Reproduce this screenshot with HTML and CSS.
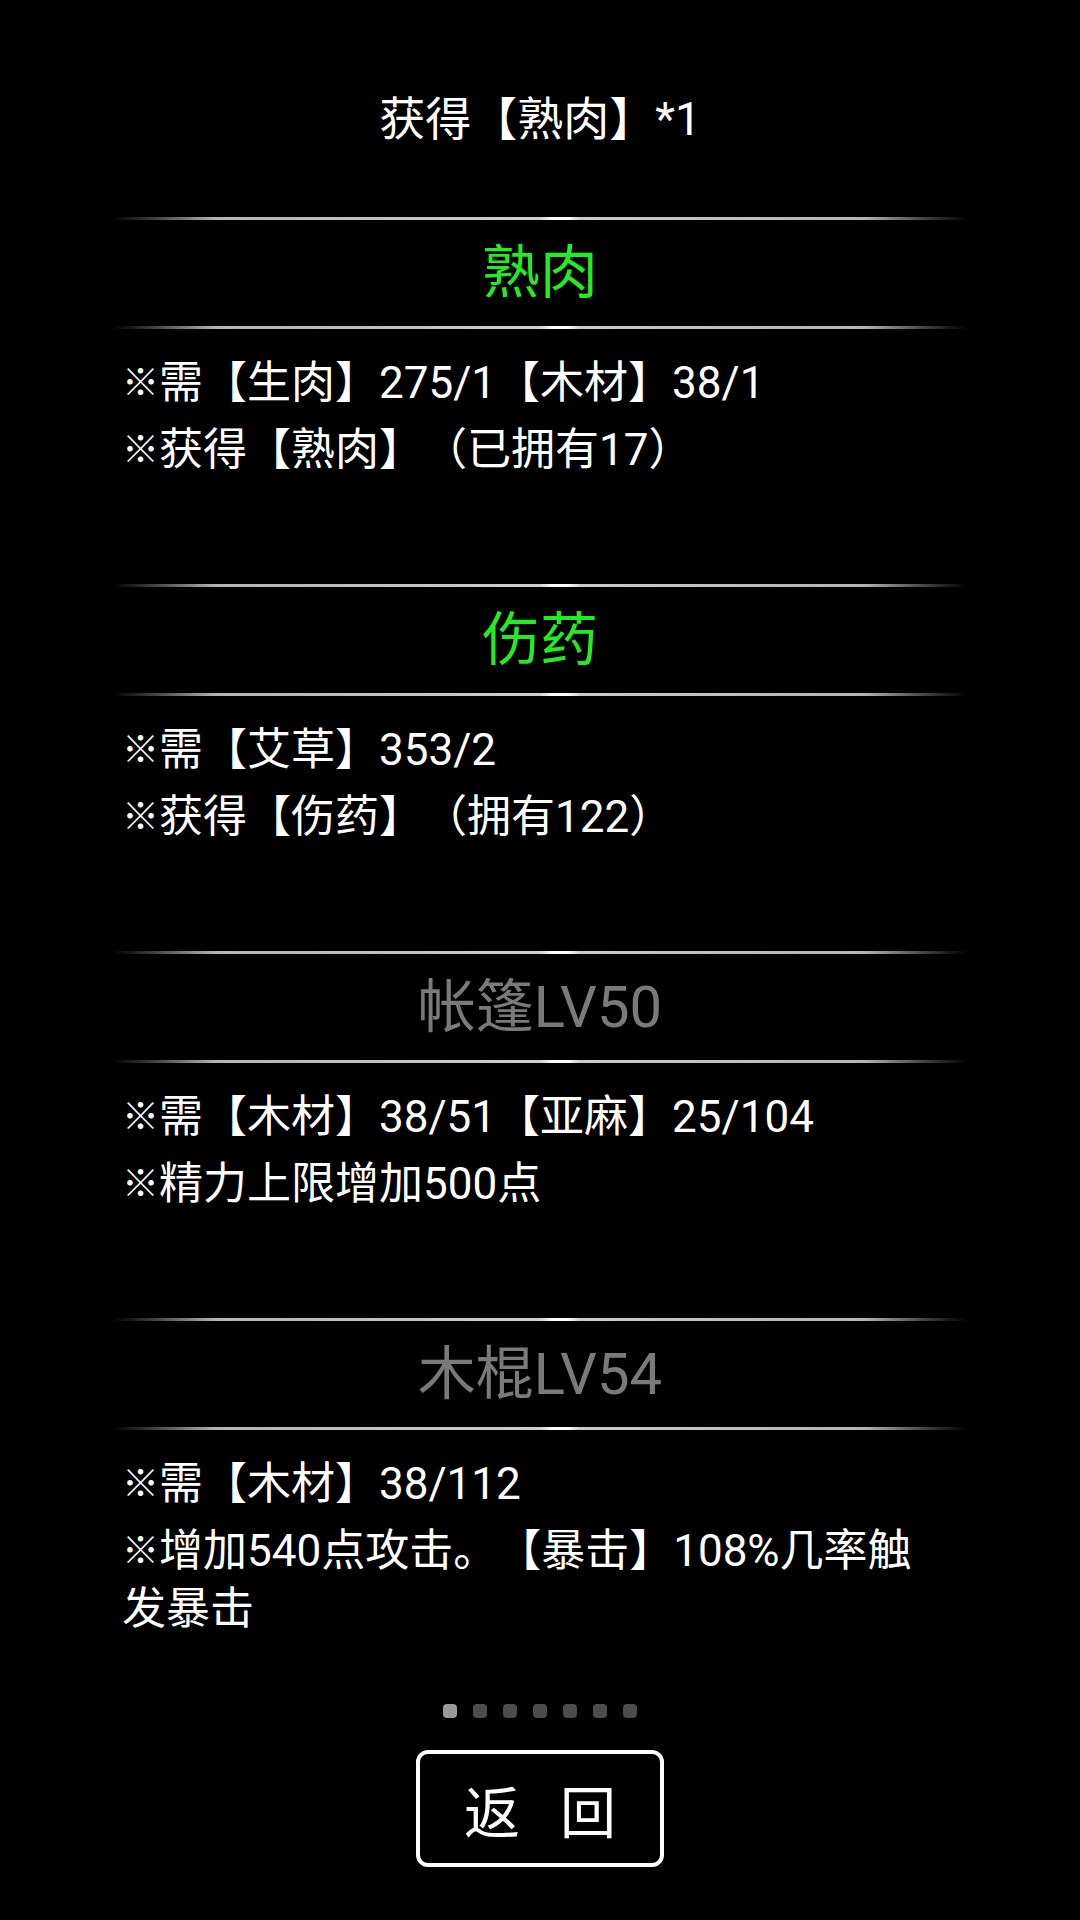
FILE: index.html
```html
<!DOCTYPE html>
<html lang="zh-CN">
<head>
<meta charset="utf-8">
<title>制作</title>
<link rel="stylesheet" href="styles.css">
</head>
<body>
<div class="page">
  <div class="header">获得【熟肉】*1</div>

  <section class="item">
    <div class="rule"></div>
    <div class="item-title green">熟肉</div>
    <div class="rule"></div>
    <div class="item-body">
      <p><span class="ref">※</span>需【生肉】275/1【木材】38/1</p>
      <p><span class="ref">※</span>获得【熟肉】（已拥有17）</p>
    </div>
  </section>

  <section class="item">
    <div class="rule"></div>
    <div class="item-title green">伤药</div>
    <div class="rule"></div>
    <div class="item-body">
      <p><span class="ref">※</span>需【艾草】353/2</p>
      <p><span class="ref">※</span>获得【伤药】（拥有122）</p>
    </div>
  </section>

  <section class="item">
    <div class="rule"></div>
    <div class="item-title gray">帐篷LV50</div>
    <div class="rule"></div>
    <div class="item-body">
      <p><span class="ref">※</span>需【木材】38/51【亚麻】25/104</p>
      <p><span class="ref">※</span>精力上限增加500点</p>
    </div>
  </section>

  <section class="item">
    <div class="rule"></div>
    <div class="item-title gray">木棍LV54</div>
    <div class="rule"></div>
    <div class="item-body">
      <p><span class="ref">※</span>需【木材】38/112</p>
      <p><span class="ref">※</span>增加540点攻击。【暴击】108%几率触发暴击</p>
    </div>
  </section>

  <div class="dots">
    <span class="dot active"></span>
    <span class="dot"></span>
    <span class="dot"></span>
    <span class="dot"></span>
    <span class="dot"></span>
    <span class="dot"></span>
    <span class="dot"></span>
  </div>

  <div class="actions">
    <button class="back-btn"><span>返</span><span>回</span></button>
  </div>
</div>
</body>
</html>
```

FILE: styles.css
```css
html, body {
  margin: 0;
  padding: 0;
  background: #000;
}

body {
  width: 1080px;
  height: 1920px;
  overflow: hidden;
  font-family: "Roboto", "Noto Sans CJK SC", sans-serif;
  color: #fff;
  text-spacing-trim: space-all;
}

.page {
  display: flex;
  flex-direction: column;
}

.header {
  font-size: 46px;
  line-height: 58px;
  text-align: center;
  padding-top: 90px;
  padding-bottom: 69px;
}

.item {
  display: flex;
  flex-direction: column;
}

.rule {
  position: relative;
  height: 3px;
  margin: 0 113px;
  background: linear-gradient(to right,
    rgba(170,170,170,0) 0%,
    rgba(170,170,170,0.4) 5%,
    #b4b4b4 12%,
    #cfcfcf 50%,
    #b4b4b4 88%,
    rgba(170,170,170,0.4) 95%,
    rgba(170,170,170,0) 100%);
}

.rule::after {
  content: "";
  position: absolute;
  left: 427px;
  width: 40px;
  top: 0;
  height: 3px;
  background: linear-gradient(to right, rgba(255,255,255,0), #fff 30%, #fff 70%, rgba(255,255,255,0));
}

.item-title {
  height: 106px;
  line-height: 106px;
  font-size: 58px;
  text-align: center;
}

.green {
  color: #22ec22;
}

.gray {
  color: #7a7a7a;
}

.item-body {
  box-sizing: border-box;
  height: 255px;
  padding: 25px 138px 0 122px;
  font-size: 44px;
}

.item-body p {
  margin: 0 0 9px;
  line-height: 58px;
}

.ref {
  font-size: 37px;
  font-weight: 700;
  line-height: 1;
  vertical-align: 2px;
}

.dots {
  display: flex;
  justify-content: center;
  gap: 16px;
  margin-top: 19px;
}

.dot {
  width: 14px;
  height: 14px;
  border-radius: 4px;
  background: #4c4c4c;
}

.dot.active {
  background: #9a9a9a;
}

.actions {
  display: flex;
  justify-content: center;
  margin-top: 32px;
}

.back-btn {
  box-sizing: border-box;
  width: 248px;
  height: 117px;
  border: 4px solid #fff;
  border-radius: 12px;
  background: #000;
  color: #fff;
  font-family: "Noto Sans CJK SC", sans-serif;
  font-size: 56px;
  display: flex;
  align-items: center;
  justify-content: center;
  gap: 40px;
  padding: 0;
}
```
